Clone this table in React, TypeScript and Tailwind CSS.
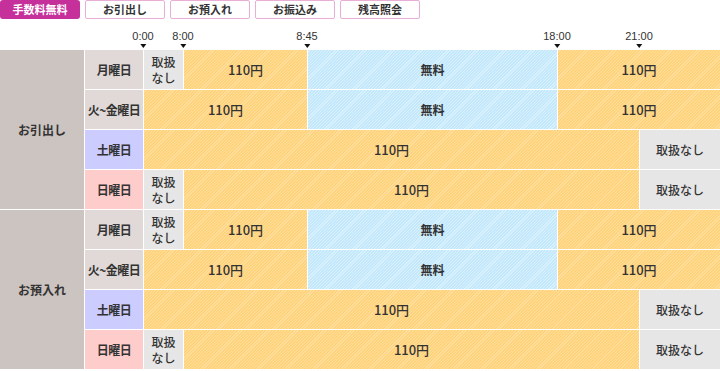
import React from "react"

type Seg = { w?: string; kind: "o" | "b" | "g" | "g2"; label: string }

interface IRow {
  day: string
  dayBg: string
  segs: Seg[]
}

const orange =
  "bg-[repeating-linear-gradient(135deg,#ffd27c_0px,#ffd27c_1.4px,#ffdd9a_1.4px,#ffdd9a_2.2px)]"
const blue =
  "bg-[repeating-linear-gradient(135deg,#c4e8fb_0px,#c4e8fb_1.4px,#d9f1fd_1.4px,#d9f1fd_2.2px)]"

const weekday: Seg[] = [
  { w: "w-[39px]", kind: "g2", label: "取扱\nなし" },
  { w: "w-[123px]", kind: "o", label: "110円" },
  { w: "w-[249px]", kind: "b", label: "無料" },
  { kind: "o", label: "110円" },
]

const rows: IRow[] = [
  { day: "月曜日", dayBg: "bg-[#e0d9d7]", segs: weekday },
  {
    day: "火~金曜日",
    dayBg: "bg-[#e0d9d7]",
    segs: [
      { w: "w-[163px]", kind: "o", label: "110円" },
      { w: "w-[249px]", kind: "b", label: "無料" },
      { kind: "o", label: "110円" },
    ],
  },
  {
    day: "土曜日",
    dayBg: "bg-[#ccccff]",
    segs: [
      { w: "w-[495px]", kind: "o", label: "110円" },
      { kind: "g", label: "取扱なし" },
    ],
  },
  {
    day: "日曜日",
    dayBg: "bg-[#ffcccc]",
    segs: [
      { w: "w-[39px]", kind: "g2", label: "取扱\nなし" },
      { w: "w-[455px]", kind: "o", label: "110円" },
      { kind: "g", label: "取扱なし" },
    ],
  },
]

const groups = ["お引出し", "お預入れ"]
const tabs = ["お引出し", "お預入れ", "お振込み", "残高照会"]

const marks = [
  { t: "0:00", x: "left-[143px]" },
  { t: "8:00", x: "left-[183px]" },
  { t: "8:45", x: "left-[307px]" },
  { t: "18:00", x: "left-[557px]" },
  { t: "21:00", x: "left-[639px]" },
]

function Cell({ seg }: { seg: Seg }) {
  const bg = seg.kind === "o" ? orange : seg.kind === "b" ? blue : "bg-[#e6e6e6]"
  return (
    <div
      className={`${seg.w ?? "flex-1"} ${bg} flex items-center justify-center text-center whitespace-pre-line ${
        seg.kind === "g2" ? "text-[12px] leading-[16px] font-medium" : seg.kind === "g" ? "text-[12px] font-medium" : seg.kind === "b" ? "text-[12px] font-bold" : "text-[13px] font-medium"
      }`}
    >
      {seg.label}
    </div>
  )
}

export default function App() {
  return (
    <div className="w-[720px] h-[371px] bg-white text-[#333] overflow-hidden [font-family:'Noto_Sans_CJK_JP','Noto_Sans',sans-serif]">
      <div className="flex gap-[5px] h-[20px]">
        <div className="w-[80px] h-[19px] rounded-[3px] bg-[#c6309a] text-white text-[11px] font-bold flex items-center justify-center">
          手数料無料
        </div>
        {tabs.map((t) => (
          <div
            key={t}
            className="w-[80px] h-[19px] rounded-[2px] border border-[#e8aed6] text-[11px] font-bold flex items-center justify-center"
          >
            {t}
          </div>
        ))}
      </div>

      <div className="relative h-[30px]">
        {marks.map((m) => (
          <div key={m.t} className={`absolute top-[10px] ${m.x} -translate-x-1/2 flex flex-col items-center`}>
            <span className="text-[11px] leading-[13px] [font-family:'Liberation_Sans',sans-serif]">{m.t}</span>
            <span className="mt-[1px] w-0 h-0 border-l-[3px] border-r-[3px] border-t-[4px] border-l-transparent border-r-transparent border-t-[#111]" />
          </div>
        ))}
      </div>

      <div className="flex flex-col gap-px">
        {groups.map((g) => (
          <div key={g} className="flex gap-px">
            <div className="w-[84px] bg-[#ccc4c0] flex items-center justify-center text-[12px] font-bold">{g}</div>
            <div className="flex-1 flex flex-col gap-px">
              {rows.map((r) => (
                <div key={r.day} className="flex gap-px h-[39px]">
                  <div className={`w-[58px] ${r.dayBg} flex items-center justify-center text-[12px] font-bold tracking-[-0.5px]`}>
                    {r.day}
                  </div>
                  {r.segs.map((s, i) => (
                    <Cell key={i} seg={s} />
                  ))}
                </div>
              ))}
            </div>
          </div>
        ))}
      </div>
    </div>
  )
}
